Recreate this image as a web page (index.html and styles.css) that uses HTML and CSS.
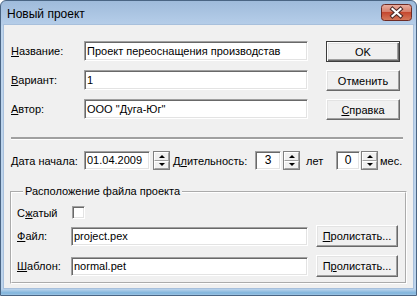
FILE: index.html
```
<!DOCTYPE html>
<html lang="ru">
<head>
<meta charset="utf-8">
<title>Новый проект</title>
<link rel="stylesheet" href="styles.css">
</head>
<body>
<div class="window">
  <div class="titlebar">
    <span class="title">Новый проект</span>
    <span class="close">
      <svg width="31" height="17" viewBox="0 0 31 17">
        <defs>
          <linearGradient id="cg" x1="0" y1="0" x2="0" y2="1">
            <stop offset="0" stop-color="#eab0a2"/>
            <stop offset="0.45" stop-color="#d6806c"/>
            <stop offset="0.5" stop-color="#c5482f"/>
            <stop offset="1" stop-color="#d67c5e"/>
          </linearGradient>
        </defs>
        <rect x="0.5" y="0.5" width="30" height="16" rx="3" fill="url(#cg)" stroke="#6e2b24"/>
        <path d="M11.5 5 L19.5 12 M19.5 5 L11.5 12" stroke="#4b2a27" stroke-width="4.2" stroke-linecap="square"/>
        <path d="M11.5 5 L19.5 12 M19.5 5 L11.5 12" stroke="#ffffff" stroke-width="2.2" stroke-linecap="square"/>
      </svg>
    </span>
  </div>
  <div class="client">
    <div class="main-grid">
      <span class="lbl"><u>Н</u>азвание:</span>
      <div class="edit">Проект переоснащения производстав</div>
      <div class="btn default">OK</div>
      <span class="lbl"><u>В</u>ариант:</span>
      <div class="edit">1</div>
      <div class="btn">Отменить</div>
      <span class="lbl"><u>А</u>втор:</span>
      <div class="edit">ООО "Дуга-Юг"</div>
      <div class="btn"><u>С</u>правка</div>
    </div>
    <div class="sep"></div>
    <div class="dates">
      <span class="lbl date-lbl"><u>Д</u>ата начала:</span>
      <div class="edit date">01.04.2009</div>
      <div class="spin s-date"><i class="up"></i><i class="down"></i></div>
      <span class="lbl dur-lbl">Д<u>л</u>ительность:</span>
      <div class="edit num years">3</div>
      <div class="spin s-years"><i class="up"></i><i class="down"></i></div>
      <span class="unit years-unit">лет</span>
      <div class="edit num months">0</div>
      <div class="spin s-months"><i class="up"></i><i class="down"></i></div>
      <span class="unit months-unit">мес.</span>
    </div>
    <fieldset class="group">
      <legend>Расположение файла проекта</legend>
      <div class="chk-row">
        <span class="lbl chk-lbl">С<u>ж</u>атый</span>
        <span class="check"></span>
      </div>
      <div class="file-grid">
        <span class="lbl"><u>Ф</u>айл:</span>
        <div class="edit">project.pex</div>
        <div class="btn browse"><u>П</u>ролистать...</div>
        <span class="lbl"><u>Ш</u>аблон:</span>
        <div class="edit">normal.pet</div>
        <div class="btn browse">П<u>р</u>олистать...</div>
      </div>
    </fieldset>
  </div>
</div>
</body>
</html>
```
FILE: styles.css
```
* { box-sizing: border-box; }
html, body { margin: 0; padding: 0; }
body {
  width: 417px;
  height: 296px;
  overflow: hidden;
  background: #ffffff;
  font-family: "Liberation Sans", Arial, sans-serif;
  font-size: 11px;
  color: #000;
}
u { text-decoration: underline; text-underline-offset: 1px; }

.window {
  width: 417px;
  height: 296px;
  border: 1px solid #4a6584;
  border-radius: 6px 6px 0 0;
  background: linear-gradient(#9fbbdb, #b6cee9 24px, #bdd4ec 25px, #bdd4ec 288px, #7fb4dc 292px, #bdd4ec 296px);
  padding: 0 3px 7px 3px;
  display: flex;
  flex-direction: column;
}

.titlebar {
  height: 24px;
  flex: none;
  display: flex;
  align-items: center;
  padding: 1px 1px 0 3px;
}
.title {
  font-size: 12px;
  color: #000;
}
.close {
  margin-left: auto;
  width: 31px;
  height: 17px;
  margin-top: -3px;
  display: block;
}
.close svg { display: block; }

.client {
  flex: none;
  height: 263px;
  background: #f0f0f0;
  padding: 16px 0 0 7px;
  box-shadow: 0 0 0 1px #a8c0dc;
}

.main-grid {
  display: grid;
  grid-template-columns: 73px 224px 92px;
  row-gap: 9px;
  grid-auto-rows: 20px;
  align-items: center;
}
.main-grid .btn { width: 74px; justify-self: end; }

.lbl { white-space: nowrap; }

.edit {
  height: 20px;
  background: #fff;
  border: 1px solid;
  border-color: #a0a0a0 #ffffff #ffffff #a0a0a0;
  box-shadow: inset 1px 1px #696969, inset -1px -1px #e3e3e3;
  padding: 0 2px 0 2px;
  line-height: 18px;
  white-space: nowrap;
  overflow: hidden;
}

.btn {
  height: 21px;
  align-self: start;
  display: flex;
  align-items: center;
  justify-content: center;
  background: #f0f0f0;
  border: 1px solid;
  border-color: #ffffff #696969 #696969 #ffffff;
  box-shadow: inset -1px -1px #a0a0a0, inset 1px 1px #e3e3e3;
  white-space: nowrap;
}
.btn.default {
  border-color: #3c3c3c;
  box-shadow: inset 1px 1px #ffffff, inset -1px -1px #696969, inset -2px -2px #a0a0a0, inset 2px 2px #e3e3e3;
}

.sep {
  width: 392px;
  margin-top: 18px;
  border-top: 2px solid #a0a0a0;
  border-bottom: 1px solid #ffffff;
}

.dates {
  display: flex;
  align-items: center;
  height: 19px;
  margin-top: 11px;
}
.date-lbl { width: 73px; }
.edit.date { width: 66px; height: 19px; line-height: 17px; }
.edit.num { height: 19px; line-height: 17px; text-align: center; padding: 0; font-size: 12px; }
.edit.years { width: 26px; }
.edit.months { width: 24px; }
.s-date { margin-left: 3px; }
.dur-lbl { margin-left: 3px; width: 82px; }
.s-years { margin-left: 2px; }
.years-unit { margin-left: 6px; width: 30px; }
.s-months { margin-left: 1px; }
.months-unit { margin-left: 2px; }

.spin {
  width: 17px;
  height: 19px;
  display: flex;
  flex-direction: column;
  border: 1px solid #808080;
}
.spin i {
  flex: 1;
  display: flex;
  align-items: center;
  justify-content: center;
  background: #f0f0f0;
  border: 1px solid;
  border-color: #ffffff #a0a0a0 #a0a0a0 #ffffff;
}
.spin i.up::before {
  content: "";
  border-left: 3px solid transparent;
  border-right: 3px solid transparent;
  border-bottom: 3px solid #000;
}
.spin i.down::before {
  content: "";
  border-left: 3px solid transparent;
  border-right: 3px solid transparent;
  border-top: 3px solid #000;
}

.group {
  margin: 15px 0 0 -1px;
  width: 397px;
  border: 2px groove #ffffff;
  padding: 8px 5px 5px 5px;
  min-width: 0;
}
.group legend {
  padding: 0 2px;
  margin-left: 6px;
  font-size: 11px;
  line-height: 13px;
}

.chk-row {
  display: flex;
  align-items: center;
  height: 13px;
  margin-bottom: 6px;
}
.chk-lbl { width: 55px; }
.check {
  width: 13px;
  height: 13px;
  background: #fff;
  border: 1px solid;
  border-color: #a0a0a0 #ffffff #ffffff #a0a0a0;
  box-shadow: inset 1px 1px #696969, inset -1px -1px #e3e3e3;
}

.file-grid {
  display: grid;
  grid-template-columns: 54px 237px 90px;
  row-gap: 8px;
  grid-auto-rows: 22px;
  align-items: center;
}
.file-grid .edit { height: 19px; line-height: 17px; }
.btn.browse { width: 82px; height: 22px; align-self: stretch; justify-self: end; }
```
